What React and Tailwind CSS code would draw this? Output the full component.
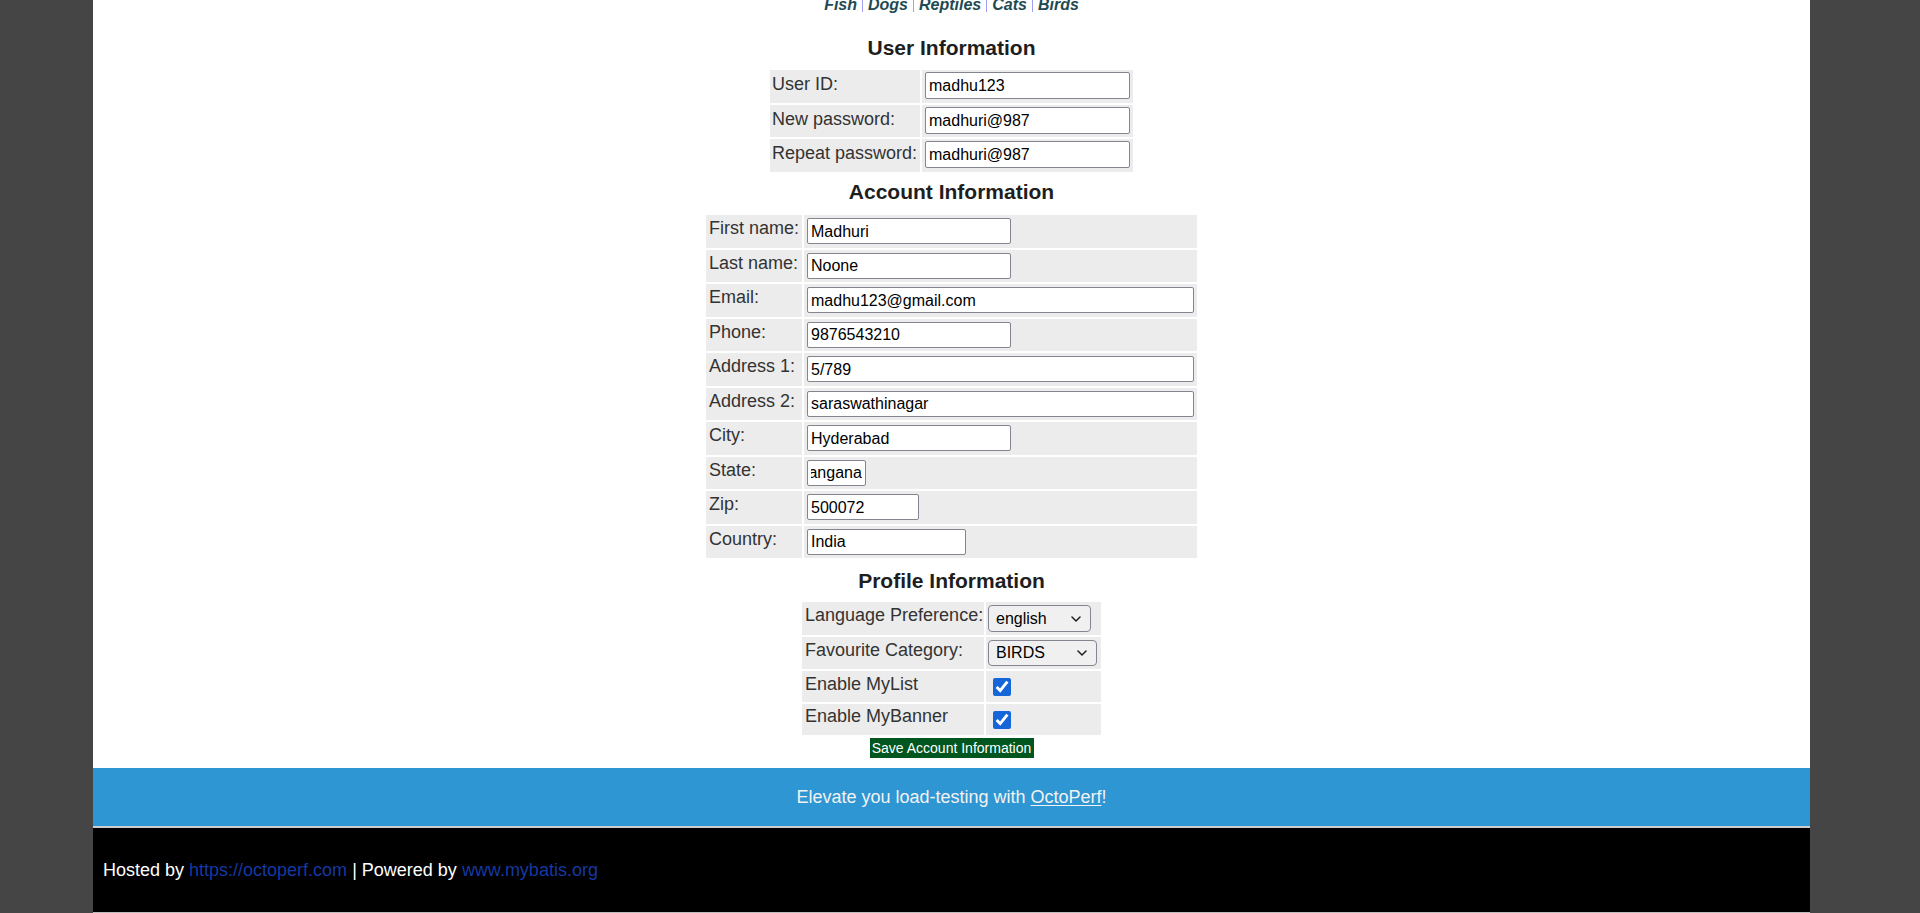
import React, { useEffect, useRef } from "react";

const Field = ({ value, className, inputRef }) => (
  <input
    ref={inputRef}
    readOnly
    value={value}
    className={`border border-[#858591] rounded-[2px] bg-white px-[3px] pt-[1px] text-[16px] text-black outline-none ${className}`}
  />
);

const Chevron = () => (
  <svg width="10" height="6" viewBox="0 0 10 6" className="pointer-events-none absolute right-[10px] top-1/2 -translate-y-1/2">
    <path d="M1 1l4 4 4-4" stroke="#1f1f1f" strokeWidth="1.5" fill="none" strokeLinecap="round" strokeLinejoin="round" />
  </svg>
);

const Select = ({ value, options, className }) => (
  <div className="relative inline-block">
    <select
      value={value}
      onChange={() => {}}
      className={`appearance-none border border-[#858591] rounded-[4px] bg-[#f0f0f0] pl-[7px] text-[16px] text-black outline-none ${className}`}
    >
      {options.map((o) => (
        <option key={o} value={o}>
          {o}
        </option>
      ))}
    </select>
    <Chevron />
  </div>
);

const Heading = ({ children, className }) => (
  <h3 className={`h-[24px] leading-[24px] text-[21px] font-bold text-center text-[#1e1e1e] ${className}`}>{children}</h3>
);

export default function App() {
  const stateRef = useRef(null);

  useEffect(() => {
    if (stateRef.current) stateRef.current.scrollLeft = 1000;
  }, []);

  const userRows = [
    { label: "User ID:", value: "madhu123" },
    { label: "New password:", value: "madhuri@987" },
    { label: "Repeat password:", value: "madhuri@987" },
  ];

  const accountRows = [
    { label: "First name:", value: "Madhuri", w: "w-[204px]" },
    { label: "Last name:", value: "Noone", w: "w-[204px]" },
    { label: "Email:", value: "madhu123@gmail.com", w: "w-[387px]" },
    { label: "Phone:", value: "9876543210", w: "w-[204px]" },
    { label: "Address 1:", value: "5/789", w: "w-[387px]" },
    { label: "Address 2:", value: "saraswathinagar", w: "w-[387px]" },
    { label: "City:", value: "Hyderabad", w: "w-[204px]" },
    { label: "State:", value: "Telangana", w: "w-[59px]", state: true },
    { label: "Zip:", value: "500072", w: "w-[112px]" },
    { label: "Country:", value: "India", w: "w-[159px]" },
  ];

  const links = ["Fish", "Dogs", "Reptiles", "Cats", "Birds"];

  return (
    <div className="h-[913px] overflow-hidden bg-[#454545] font-['Liberation_Sans',Arial,sans-serif]">
      <div className="ml-[93px] w-[1717px] bg-white flex flex-col">
        {/* Quick links (scrolled partly off the top) */}
        <div className="h-[36px] overflow-hidden">
          <div className="-mt-[4px] flex justify-center items-start leading-[18px] text-[16px] font-bold italic text-[#1f4a52]">
            {links.map((l, i) => (
              <React.Fragment key={l}>
                {i > 0 && <span className="mx-[5px] w-px h-[16px] bg-[#a0a0f2]" />}
                <span>{l}</span>
              </React.Fragment>
            ))}
          </div>
        </div>

        {/* User Information */}
        <Heading className="mb-[10px]">User Information</Heading>
        <div className="flex flex-col items-center gap-[2px]">
          {userRows.map((r) => (
            <div key={r.label} className="flex gap-[2px] h-[32.5px]">
              <div className="w-[150px] bg-[#ececec] pl-[2px] pt-[4px] text-[18px] leading-[21px] text-[#333]">{r.label}</div>
              <div className="w-[211px] bg-[#ececec] pl-[3px] pt-[2px]">
                <Field value={r.value} className="w-[205px] h-[27px]" />
              </div>
            </div>
          ))}
        </div>

        {/* Account Information */}
        <Heading className="mt-[8.5px] mb-[11px]">Account Information</Heading>
        <div className="flex flex-col items-center gap-[2px]">
          {accountRows.map((r) => (
            <div key={r.label} className="flex gap-[2px] h-[32.5px]">
              <div className="w-[96px] bg-[#ececec] pl-[3px] pt-[3px] text-[18px] leading-[21px] text-[#333]">{r.label}</div>
              <div className="w-[393px] bg-[#ececec] pl-[3px] pt-[3px]">
                <Field value={r.value} className={`${r.w} h-[26px]`} inputRef={r.state ? stateRef : undefined} />
              </div>
            </div>
          ))}
        </div>

        {/* Profile Information */}
        <Heading className="mt-[10.5px] mb-[9.5px]">Profile Information</Heading>
        <div className="flex flex-col items-center gap-[2px]">
          <div className="flex gap-[2px] h-[32.5px]">
            <div className="w-[182px] bg-[#ececec] pl-[3px] pt-[3px] text-[18px] leading-[21px] text-[#333]">Language Preference:</div>
            <div className="w-[115px] bg-[#ececec] pl-[2px] pt-[3px]">
              <Select value="english" options={["english", "japanese"]} className="w-[103px] h-[27px]" />
            </div>
          </div>
          <div className="flex gap-[2px] h-[32.5px]">
            <div className="w-[182px] bg-[#ececec] pl-[3px] pt-[3px] text-[18px] leading-[21px] text-[#333]">Favourite Category:</div>
            <div className="w-[115px] bg-[#ececec] pl-[2px] pt-[3.5px]">
              <Select value="BIRDS" options={["FISH", "DOGS", "REPTILES", "CATS", "BIRDS"]} className="w-[109px] h-[26px]" />
            </div>
          </div>
          <div className="flex gap-[2px] h-[31px]">
            <div className="w-[182px] bg-[#ececec] pl-[3px] pt-[3px] text-[18px] leading-[21px] text-[#333]">Enable MyList</div>
            <div className="w-[115px] bg-[#ececec] pl-[7px] pt-[7px]">
              <input type="checkbox" checked readOnly className="block w-[18px] h-[18px] accent-[#1466d9]" />
            </div>
          </div>
          <div className="flex gap-[2px] h-[30.5px]">
            <div className="w-[182px] bg-[#ececec] pl-[3px] pt-[2px] text-[18px] leading-[21px] text-[#333]">Enable MyBanner</div>
            <div className="w-[115px] bg-[#ececec] pl-[7px] pt-[7px]">
              <input type="checkbox" checked readOnly className="block w-[18px] h-[18px] accent-[#1466d9]" />
            </div>
          </div>
        </div>

        <div className="flex justify-center mt-[3.5px] mb-[10px]">
          <button className="w-[164px] h-[20px] bg-[#00561f] text-white text-[14px] leading-[20px] text-center whitespace-nowrap">
            Save Account Information
          </button>
        </div>

        {/* Banner */}
        <div className="h-[58px] bg-[#2e96d3] flex items-center justify-center text-[18px] text-[#f2f2f2]">
          <span>
            Elevate you load-testing with <span className="underline underline-offset-2">OctoPerf</span>!
          </span>
        </div>
        <div className="h-[2px] bg-[#cccccc]" />

        {/* Footer */}
        <div className="h-[84px] bg-black flex items-center pl-[10px] text-[18px] text-white">
          <span>
            Hosted by <span className="text-[#1538a3]">https://octoperf.com</span> | Powered by{" "}
            <span className="text-[#1538a3]">www.mybatis.org</span>
          </span>
        </div>
        <div className="h-px bg-[#bdbdbd]" />
      </div>
    </div>
  );
}
